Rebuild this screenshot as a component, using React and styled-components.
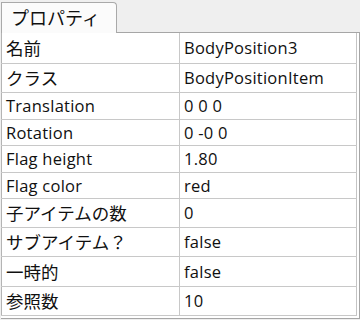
import React from 'react';
import styled, { createGlobalStyle } from 'styled-components';

const GlobalStyle = createGlobalStyle`
  html, body {
    margin: 0;
    padding: 0;
    background: #efefef;
  }
  body {
    font-family: "Open Sans", "Noto Sans CJK JP", sans-serif;
    color: #101010;
  }
`

const rows = [
  { name: '名前', value: 'BodyPosition3', cjk: true, h: 30 },
  { name: 'クラス', value: 'BodyPositionItem', cjk: true, h: 29 },
  { name: 'Translation', value: '0 0 0', h: 27 },
  { name: 'Rotation', value: '0 -0 0', h: 26 },
  { name: 'Flag height', value: '1.80', h: 27 },
  { name: 'Flag color', value: 'red', h: 26 },
  { name: '子アイテムの数', value: '0', cjk: true, h: 29 },
  { name: 'サブアイテム？', value: 'false', cjk: true, h: 29 },
  { name: '一時的', value: 'false', cjk: true, h: 30 },
  { name: '参照数', value: '10', cjk: true, h: 29 },
]

const App = () => {
  return (
    <>
      <GlobalStyle />
      <Window>
        <TabBar>
          <Tab>プロパティ</Tab>
        </TabBar>
        <Panel>
          <Grid>
            <tbody>
              {rows.map(r => (
                <Row key={r.name} $h={r.h}>
                  <NameCell $cjk={r.cjk}>{r.name}</NameCell>
                  <ValueCell>{r.value}</ValueCell>
                </Row>
              ))}
            </tbody>
          </Grid>
        </Panel>
      </Window>
    </>
  )
}

const Window = styled.div`
  width: 360px;
  height: 320px;
  display: flex;
  flex-direction: column;
  background: #efefef;
`
const TabBar = styled.div`
  height: 32px;
  display: flex;
  align-items: flex-end;
  padding-left: 1px;
`
const Tab = styled.div`
  width: 116px;
  height: 31px;
  box-sizing: border-box;
  border: 1px solid #a9a9a9;
  border-bottom: none;
  border-top-right-radius: 4px;
  background: #fbfbfb;
  font-size: 18px;
  line-height: 30px;
  padding-left: 9px;
  margin-bottom: -1px;
  position: relative;
  z-index: 1;
`
const Panel = styled.div`
  margin: 0 0 0 1px;
  width: 359px;
  height: 287px;
  box-sizing: border-box;
  border: 1px solid #a6a6a6;
  border-left: none;
  background: #ffffff;
  padding: 0 2px 0 0;
`
const Grid = styled.table`
  width: 356px;
  border-collapse: collapse;
  table-layout: fixed;
  border-right: 1px solid #c4c4c4;
  border-bottom: 1px solid #c4c4c4;
  border-left: 1px solid #b4b4b4;
`
const Row = styled.tr`
  height: ${p => p.$h}px;
  border-bottom: 1px solid #c8c8c8;
`
const NameCell = styled.td`
  width: 173px;
  padding: 0 0 0 4px;
  font-size: ${p => (p.$cjk ? '17.5px' : '16.5px')};
  letter-spacing: ${p => (p.$cjk ? '0' : '0.25px')};
  white-space: nowrap;
  border-right: 1px solid #c8c8c8;
  vertical-align: middle;
`
const ValueCell = styled.td`
  padding: 0 0 0 4px;
  font-size: 16.5px;
  letter-spacing: 0.25px;
  white-space: nowrap;
  vertical-align: middle;
`

export default App;
